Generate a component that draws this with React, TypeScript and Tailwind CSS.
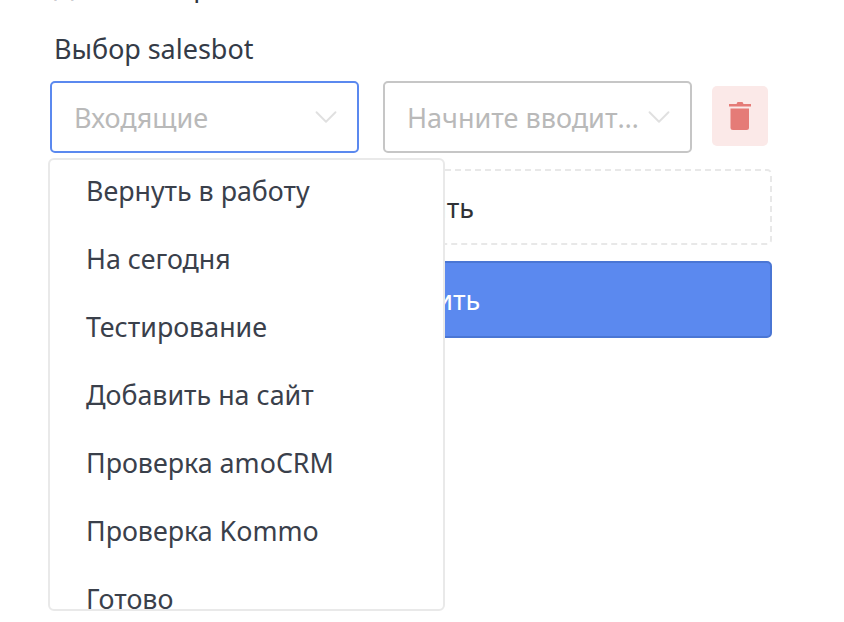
import { ChevronDown } from 'lucide-react';

const stages = ['Вернуть в работу', 'На сегодня', 'Тестирование', 'Добавить на сайт', 'Проверка amoCRM', 'Проверка Kommo', 'Готово'];

function Select({ text, active }: { text: string; active?: boolean }) {
  return (
    <div className={`flex h-[72px] w-[309px] items-center justify-between rounded-[5px] border-2 bg-white pl-[22px] pr-[12px] ${active ? 'border-[#5b89ef]' : 'border-[#c6c6c6]'}`}>
      <span className="min-w-0 truncate pt-[2px] text-[27px] text-[#b9b9b9]">{text}</span>
      <ChevronDown className="-ml-[10px] h-[38px] w-[38px] shrink-0 text-[#e0e0e0]" strokeWidth={1.2} />
    </div>
  );
}

export default function App() {
  return (
    <div className="h-[622px] w-[844px] overflow-hidden bg-white pl-[50px] font-['Noto_Sans',sans-serif]">
      <div className="w-[722px]">
        <p className="-mt-[32px] mb-[27px] h-[36px] pl-[4px] text-[27px] leading-[36px] text-[#2f3640]">Для поддержки salesbot</p>
        <label className="block h-[36px] pl-[4px] text-[27px] leading-[36px] text-[#343b47]">Выбор salesbot</label>

        <div className="relative mt-[14px]">
          <div className="flex items-center">
            <Select text="Входящие" active />
            <div className="ml-[24px]">
              <Select text="Начните вводить название" />
            </div>
            <button className="ml-[20px] -mt-[2px] flex h-[60px] w-[56px] items-center justify-center rounded-[5px] bg-[#fbe9e8]">
              <svg width="24" height="30" viewBox="0 0 24 30">
                <path d="M8.5 3 L9.5 1 H14.5 L15.5 3 H23 V5.5 H1 V3 Z" fill="#e57b77" />
                <path d="M2.5 7.5 H21 V26.5 Q21 29 18.5 29 H5 Q2.5 29 2.5 26.5 Z" fill="#e57b77" />
              </svg>
            </button>
          </div>

          <button className="mt-[16px] flex h-[76px] w-full items-center justify-center rounded-[5px] border-2 border-dashed border-[#e8e8e8] bg-white pt-[2px] text-[27px] text-[#2f3236]">
            Добавить
          </button>
          <button className="mt-[16px] flex h-[77px] w-full items-center justify-center rounded-[5px] border-2 border-[#4a76d4] bg-[#5b89ef] pt-[2px] text-[27px] text-white">
            Сохранить
          </button>

          {/* open dropdown */}
          <div className="absolute left-[-2px] top-[77px] h-[453px] w-[397px] overflow-hidden rounded-[6px] border-2 border-[#e9e9e9] bg-white pl-[36px]">
            <div className="-mt-[3px]">
              {stages.map((s) => (
                <div key={s} className="flex h-[68px] items-center text-[26.8px] text-[#3a404b]">
                  {s}
                </div>
              ))}
            </div>
          </div>
        </div>
      </div>
    </div>
  );
}
